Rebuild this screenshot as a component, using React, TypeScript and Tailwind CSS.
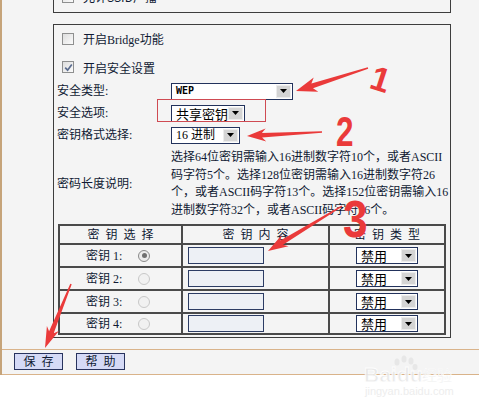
import React from "react";

function Checkbox({ checked }: { checked?: boolean }) {
  return (
    <div className="w-[12px] h-[12px] shrink-0 border border-[#8e8f8f] bg-gradient-to-br from-[#dedede] to-[#fbfbfb] flex items-center justify-center">
      {checked && (
        <svg width="9" height="9" viewBox="0 0 9 9">
          <path d="M1.2 4.6 L3.6 7.2 L7.8 1.4" stroke="#5b6c8e" strokeWidth="1.7" fill="none" />
        </svg>
      )}
    </div>
  );
}

function Select({ className, children }: { className: string; children: React.ReactNode }) {
  return (
    <div className={"flex h-[17px] border border-[#22325c] bg-white " + className}>
      <div className="flex-1 flex items-center pl-[4px] text-[12px] text-black leading-none whitespace-nowrap">{children}</div>
      <div className="w-[15px] my-[1px] mr-[1px] bg-[#d4d4d4] border border-[#ececec] flex items-center justify-center">
        <svg width="7" height="4" viewBox="0 0 7 4">
          <path d="M0 0h7L3.5 4z" fill="#000" />
        </svg>
      </div>
    </div>
  );
}

function Radio({ checked }: { checked?: boolean }) {
  return (
    <div
      className={
        checked
          ? "w-[12px] h-[12px] rounded-full border border-[#8a8a8a] bg-[#ececec] flex items-center justify-center"
          : "w-[12px] h-[12px] rounded-full border border-[#c8c8c8] bg-[#f1f1f1] flex items-center justify-center"
      }
    >
      {checked && <div className="w-[5px] h-[5px] rounded-full bg-[#707070]" />}
    </div>
  );
}

function arrowPts(tx: number, ty: number, hx: number, hy: number, headLen: number, headW: number, shaftW: number, tailW: number) {
  const dx = hx - tx;
  const dy = hy - ty;
  const L = Math.hypot(dx, dy);
  const ux = dx / L;
  const uy = dy / L;
  const px = -uy;
  const py = ux;
  const bx = hx - ux * headLen;
  const by = hy - uy * headLen;
  const cx = hx - ux * (headLen - 4);
  const cy = hy - uy * (headLen - 4);
  const pts = [
    [tx + (px * tailW) / 2, ty + (py * tailW) / 2],
    [cx + (px * shaftW) / 2, cy + (py * shaftW) / 2],
    [bx + (px * headW) / 2, by + (py * headW) / 2],
    [hx, hy],
    [bx - (px * headW) / 2, by - (py * headW) / 2],
    [cx - (px * shaftW) / 2, cy - (py * shaftW) / 2],
    [tx - (px * tailW) / 2, ty - (py * tailW) / 2],
  ];
  return pts.map((p) => p[0].toFixed(1) + "," + p[1].toFixed(1)).join(" ");
}

const keyRows = ["1", "2", "3", "4"];

export default function App() {
  return (
    <div className="relative w-[479px] h-[407px] overflow-hidden bg-white font-['Liberation_Serif','Noto_Sans_CJK_SC',serif] text-[12px] text-[#101a33]">
      <div className="h-[375px] bg-[#f4f4f4] border-l-2 border-[#c6a47a] flex flex-col">
        <div className="pl-[51px] flex flex-col">
          {/* partial top box */}
          <div className="w-[398px] h-[33px] -mt-[20px] border border-[#3d3d3d] flex items-center pl-[8px] gap-[9px]">
            <Checkbox />
            <span className="font-['Noto_Sans_CJK_SC',sans-serif]">允许SSID广播</span>
          </div>

          {/* main box */}
          <div className="mt-[11px] w-[398px] h-[314px] border border-[#3d3d3d] flex flex-col pt-[3px]">
            <div className="h-[22px] flex items-center pl-[8px] gap-[9px]">
              <Checkbox />
              <span className="pt-[2px]">开启Bridge功能</span>
            </div>
            <div className="mt-[6px] h-[22px] flex items-center pl-[8px] gap-[9px]">
              <Checkbox checked />
              <span className="pt-[3px]">开启安全设置</span>
            </div>

            <div className="mt-[2px] h-[22px] flex items-center pl-[3px]">
              <span className="w-[114px]">安全类型:</span>
              <Select className="w-[122px]">
                <span className="font-['DejaVu_Sans_Mono',monospace] text-[10px] font-bold">WEP</span>
              </Select>
            </div>
            <div className="h-[22px] flex items-center pl-[3px]">
              <span className="w-[114px]">安全选项:</span>
              <Select className="w-[74px]">
                <span className="font-['Noto_Sans_CJK_SC',sans-serif] text-[13px]">共享密钥</span>
              </Select>
            </div>
            <div className="h-[22px] flex items-center pl-[3px]">
              <span className="w-[114px]">密钥格式选择:</span>
              <Select className="w-[69px]">
                <span>16&nbsp;进制</span>
              </Select>
            </div>

            <div className="mt-[3px] flex pl-[3px]">
              <span className="w-[114px] flex items-center">密码长度说明:</span>
              <div className="flex flex-col leading-[17.5px] whitespace-nowrap">
                <span>选择64位密钥需输入16进制数字符10个，或者ASCII</span>
                <span>码字符5个。选择128位密钥需输入16进制数字符26</span>
                <span>个，或者ASCII码字符13个。选择152位密钥需输入16</span>
                <span>进制数字符32个，或者ASCII码字符16个。</span>
              </div>
            </div>

            <div className="mt-[5px] ml-[4px] w-[388px] border-2 border-[#4a4a4a] flex flex-col">
              <div className="h-[17px] grid grid-cols-[121px_2px_145px_2px_114px] items-center">
                <span className="text-center tracking-[6px] pl-[6px]">密钥选择</span>
                <div className="h-full bg-[#4a4a4a]" />
                <span className="text-center tracking-[6px] pl-[6px]">密钥内容</span>
                <div className="h-full bg-[#4a4a4a]" />
                <span className="text-center tracking-[6px] pl-[6px]">密钥类型</span>
              </div>
              {keyRows.map((n, i) => (
                <div
                  key={n}
                  className={
                    i === 3
                      ? "h-[21px] border-t-2 border-[#4a4a4a] grid grid-cols-[121px_2px_145px_2px_114px] items-center"
                      : "h-[23px] border-t-2 border-[#4a4a4a] grid grid-cols-[121px_2px_145px_2px_114px] items-center"
                  }
                >
                  <div className="flex items-center pl-[26px]">
                    <span className="w-[52px] whitespace-nowrap">密钥&nbsp;{n}:</span>
                    <Radio checked={i === 0} />
                  </div>
                  <div className="h-full bg-[#4a4a4a]" />
                  <div className="pl-[5px] flex items-center">
                    <input readOnly className="w-[76px] h-[17px] border border-[#2c3c64] bg-[#edf0f5] outline-none" />
                  </div>
                  <div className="h-full bg-[#4a4a4a]" />
                  <div className="pl-[26px] flex items-center">
                    <Select className="w-[62px]">
                      <span className="font-['Noto_Sans_CJK_SC',sans-serif] text-[13px]">禁用</span>
                    </Select>
                  </div>
                </div>
              ))}
            </div>
          </div>
        </div>

        {/* bottom bar */}
        <div className="mt-[11px] h-[26px] border-t border-b border-[#d9b38a] flex items-start pt-[3px] pl-[12px] gap-[13px]">
          <button className="w-[49px] h-[17px] border border-[#28335e] bg-[#d5daf6] text-[12px] leading-none tracking-[6px] pl-[6px] text-[#101a33]">
            保存
          </button>
          <button className="w-[49px] h-[17px] border border-[#28335e] bg-[#d5daf6] text-[12px] leading-none tracking-[6px] pl-[6px] text-[#101a33]">
            帮助
          </button>
        </div>
      </div>

      {/* annotations overlay */}
      <svg className="absolute inset-0 pointer-events-none" width="479" height="407" viewBox="0 0 479 407">
        <rect x="157.5" y="99.5" width="108" height="22" fill="none" stroke="#cf4a52" strokeWidth="1" />
        <polygon points={arrowPts(368, 68, 296, 91, 21, 15, 5, 1.5)} fill="#ea3a3a" />
        <polygon points={arrowPts(322, 132, 247, 136, 19, 13, 4.5, 1.5)} fill="#ea3a3a" />
        <polygon points={arrowPts(342, 206, 268, 251, 20, 13, 5, 1.5)} fill="#ea3a3a" />
        <polygon points={arrowPts(71, 284, 45, 348, 21, 13, 5, 1.5)} fill="#ea3a3a" />
        <text x="372" y="91" fontSize="34" fontWeight="bold" fill="#ea3a3a" fontFamily="Liberation Sans, sans-serif" transform="rotate(18 381 77)">1</text>
        <text x="336" y="146" fontSize="42" fontWeight="bold" fill="#ea3a3a" fontFamily="Liberation Sans, sans-serif" transform="translate(336 0) scale(0.75 1) translate(-336 0)">2</text>
        <text x="343" y="237" fontSize="52" fontWeight="bold" fill="#ea3a3a" fontFamily="Liberation Sans, sans-serif" transform="translate(343 0) scale(0.85 1) translate(-343 0)">3</text>

        {/* watermark */}
        <g opacity="0.9">
          <ellipse cx="397" cy="362" rx="2.5" ry="3.5" fill="#e6e6e6" />
          <ellipse cx="404" cy="359" rx="2.5" ry="3.5" fill="#e6e6e6" />
          <ellipse cx="411" cy="361" rx="2.5" ry="3.5" fill="#e6e6e6" />
          <ellipse cx="415" cy="367" rx="2.5" ry="3" fill="#e6e6e6" />
          <text x="364" y="382" fontSize="21" fontWeight="bold" fill="#e8e8e8" stroke="#ffffff" strokeWidth="0.8" fontFamily="Liberation Sans, sans-serif">Bai</text>
          <text x="397" y="382" fontSize="21" fontWeight="bold" fill="#e8e8e8" stroke="#ffffff" strokeWidth="0.8" fontFamily="Liberation Sans, sans-serif">du</text>
          <text x="422" y="381" fontSize="15" fill="#e8e8e8" stroke="#ffffff" strokeWidth="0.5" fontFamily="Noto Sans CJK SC, sans-serif">经验</text>
          <text x="365" y="395" fontSize="11" fill="#ececec" fontFamily="Liberation Sans, sans-serif">jingyan.baidu.com</text>
        </g>
      </svg>
    </div>
  );
}
